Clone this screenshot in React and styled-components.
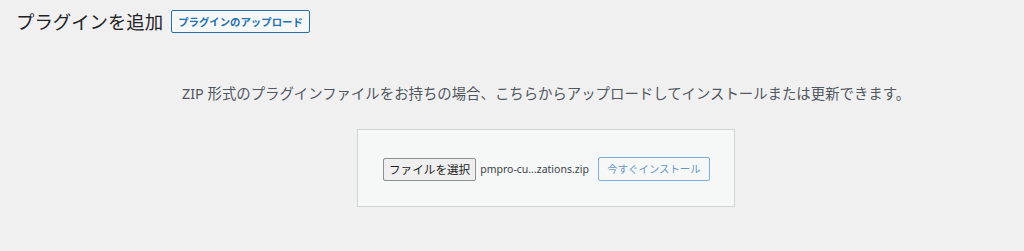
import styled, { createGlobalStyle } from "styled-components";

const GlobalStyle = createGlobalStyle`
  html, body {
    margin: 0;
    padding: 0;
    background: #f0f0f1;
  }
  body {
    font-family: "Noto Sans", "Noto Sans CJK JP", sans-serif;
    color: #3c434a;
  }
`;

const Wrap = styled.div`
  padding: 0 16px;
  height: 251px;
  overflow: hidden;
`;

const HeaderRow = styled.div`
  display: flex;
  align-items: center;
  gap: 8px;
  padding-top: 9px;
`;

const Title = styled.h1`
  margin: 0;
  font-size: 18.4px;
  font-weight: 400;
  line-height: 24px;
  color: #1d2327;
  font-family: "Noto Sans CJK JP", sans-serif;
`;

const TitleAction = styled.button`
  box-sizing: border-box;
  height: 23px;
  padding: 0 6px;
  border: 1px solid #2271b1;
  border-radius: 2px;
  background: #f6f7f7;
  color: #2271b1;
  font-family: "Noto Sans CJK JP", sans-serif;
  font-size: 10.4px;
  font-weight: 700;
  line-height: 21px;
  cursor: pointer;
`;

const UploadSection = styled.section`
  display: flex;
  flex-direction: column;
  align-items: center;
  padding: 51px 0 0 68px;
`;

const Help = styled.p`
  margin: 0 0 25px;
  font-size: 14.4px;
  line-height: 20px;
  color: #50575e;
  font-family: "Noto Sans", "Noto Sans CJK JP", sans-serif;
`;

const UploadForm = styled.form`
  display: flex;
  align-items: center;
  padding: 27px 24px 25px;
  background: #f6f7f7;
  border: 1px solid #d4d5d7;
`;

const FileField = styled.div`
  display: flex;
  align-items: center;
  gap: 4px;
  width: 212px;
  padding-left: 1px;
`;

const FileButton = styled.span`
  box-sizing: border-box;
  height: 23px;
  padding: 0 5px;
  display: inline-flex;
  align-items: center;
  background: #efefef;
  border: 1px solid #8f8f8f;
  border-radius: 2px;
  color: #1d1d1d;
  font-family: "Noto Sans CJK JP", sans-serif;
  font-size: 11.6px;
  white-space: nowrap;
`;

const FileName = styled.span`
  font-size: 10.5px;
  color: #3c434a;
  white-space: nowrap;
`;

const InstallButton = styled.button`
  box-sizing: border-box;
  margin-left: 3px;
  height: 24px;
  width: 112px;
  padding: 0;
  border: 1px solid #7eaedb;
  border-radius: 2px;
  background: #f6f7f7;
  color: #6496c8;
  font-family: "Noto Sans CJK JP", sans-serif;
  font-size: 10.4px;
  line-height: 22px;
  cursor: pointer;
`;

export default function App() {
  return (
    <>
      <GlobalStyle />
      <Wrap>
        <HeaderRow>
          <Title>プラグインを追加</Title>
          <TitleAction type="button">プラグインのアップロード</TitleAction>
        </HeaderRow>
        <UploadSection>
          <Help>
            ZIP 形式のプラグインファイルをお持ちの場合、こちらからアップロードしてインストールまたは更新できます。
          </Help>
          <UploadForm onSubmit={(e) => e.preventDefault()}>
            <FileField>
              <FileButton>ファイルを選択</FileButton>
              <FileName>pmpro-cu...zations.zip</FileName>
            </FileField>
            <InstallButton type="submit">今すぐインストール</InstallButton>
          </UploadForm>
        </UploadSection>
      </Wrap>
    </>
  );
}
